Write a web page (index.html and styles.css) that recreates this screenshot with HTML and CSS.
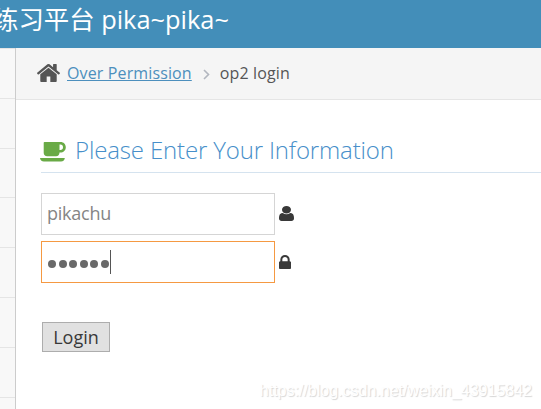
FILE: index.html
```
<!DOCTYPE html>
<html lang="zh">
<head>
    <meta charset="UTF-8">
    <title>练习平台 pika~pika~</title>
    <link rel="stylesheet" href="styles.css">
</head>
<body>
    <header class="navbar">
        <span class="brand"><span class="brand-cn">练习平台</span> pika~pika~</span>
    </header>
    <div class="main-container">
        <nav class="sidebar">
            <div class="nav-item"></div>
            <div class="nav-item"></div>
            <div class="nav-item"></div>
            <div class="nav-item"></div>
            <div class="nav-item"></div>
            <div class="nav-item"></div>
            <div class="nav-item"></div>
            <div class="nav-item"></div>
        </nav>
        <main class="content">
            <div class="breadcrumbs">
                <svg class="home-icon" viewBox="89 253 1614 1283" preserveAspectRatio="none"><path d="M1472 992v480q0 26-19 45t-45 19h-384v-384h-256v384h-384q-26 0-45-19t-19-45v-480q0-1 .5-3t.5-3l575-474 575 474q1 2 1 6zm223-69l-62 74q-8 9-21 11h-3q-13 0-21-7l-692-577-692 577q-12 8-24 7-13-2-21-11l-62-74q-8-10-7-23.5t11-21.5l719-599q32-26 76-26t76 26l244 204v-195q0-14 9-23t23-9h192q14 0 23 9t9 23v408l219 182q10 8 11 21.500t-7 23.500z"/></svg>
                <a class="crumb-link" href="#">Over Permission</a>
                <svg class="crumb-arrow" viewBox="0 0 7 11"><path d="M1 1l4.500 4.500L1 10"/></svg>
                <span class="crumb">op2 login</span>
            </div>
            <div class="page">
                <h4 class="title">
                    <svg class="coffee-icon" viewBox="0 0 26 20"><path fill-rule="evenodd" d="M4.500 0H20.500C23.700 0 25.800 2.200 25.800 5.300S23.500 10.600 20.300 10.600H19.500C19.500 13 18.200 14.300 16 14.300H7.200C5 14.300 3.700 13 3.700 10.800V.8Q3.700 0 4.500 0zM19.500 2.500V8H20.400C22 8 23 6.900 23 5.250S22 2.500 20.400 2.500zM0 16H24.800C24.800 18 23.300 19.400 21 19.400H4C1.700 19.400 0 18 0 16z"/></svg>
                    <span class="title-text">Please Enter Your Information</span>
                </h4>
                <form class="login-form">
                    <label class="row">
                        <input class="field" type="text" value="pikachu">
                        <svg class="user-icon" viewBox="256 128 1280 1536" preserveAspectRatio="none"><path d="M1536 1399q0 109-62.500 187t-150.500 78h-854q-88 0-150.500-78t-62.500-187q0-85 8.500-160.500t31.500-152 58.500-131 94-89 134.500-34.500q131 128 313 128t313-128q76 0 134.500 34.500t94 89 58.500 131 31.500 152 8.500 160.500zm-256-887q0 159-112.500 271.500t-271.500 112.500-271.500-112.500-112.500-271.500 112.500-271.500 271.500-112.500 271.500 112.500 112.500 271.500z"/></svg>
                    </label>
                    <label class="row">
                        <span class="field focus">
                            <span class="dots"><i></i><i></i><i></i><i></i><i></i><i></i></span>
                            <span class="caret"></span>
                        </span>
                        <svg class="lock-icon" viewBox="320 128 1152 1408" preserveAspectRatio="none"><path d="M640 768h512v-192q0-106-75-181t-181-75-181 75-75 181v192zm832 96v576q0 40-28 68t-68 28h-960q-40 0-68-28t-28-68v-576q0-40 28-68t68-28h32v-192q0-184 132-316t316-132 316 132 132 316v192h32q40 0 68 28t28 68z"/></svg>
                    </label>
                    <button class="submit" type="button">Login</button>
                </form>
            </div>
        </main>
    </div>
    <div class="watermark">https://blog.csdn.net/weixin_43915842</div>
</body>
</html>
```
FILE: styles.css
```
* {
    box-sizing: border-box;
}
body {
    margin: 0;
    height: 409px;
    overflow: hidden;
    display: flex;
    flex-direction: column;
    background-color: #fff;
    color: #393939;
    font-family: "Open Sans", "Noto Sans CJK SC", sans-serif;
}
.navbar {
    height: 48px;
    flex: none;
    background-color: #438eb9;
    color: #fff;
    overflow: hidden;
}
.brand {
    display: block;
    margin-left: -7px;
    font-size: 25.400px;
    line-height: 37px;
    white-space: nowrap;
}
.brand-cn {
    font-family: "Noto Sans CJK SC", sans-serif;
}
.main-container {
    flex: 1;
    display: flex;
    min-height: 0;
}
.sidebar {
    width: 16px;
    flex: none;
    overflow: hidden;
    background-color: #f8f8f8;
    border-right: 1px solid #ccc;
}
.nav-item {
    height: 49.8px;
    border-top: 1px solid #e5e5e5;
}
.content {
    flex: 1;
    min-width: 0;
}
.breadcrumbs {
    height: 52px;
    display: flex;
    align-items: center;
    padding: 0 0 2px 21px;
    background-color: #f5f5f5;
    border-bottom: 1px solid #e5e5e5;
    font-size: 16px;
    letter-spacing: 0.130px;
    color: #555;
    white-space: nowrap;
}
.home-icon {
    width: 23px;
    height: 18px;
    margin-right: 7px;
    fill: #555;
}
.crumb-link {
    color: #4c8fbd;
    text-decoration: underline;
}
.crumb-arrow {
    width: 7px;
    height: 11px;
    margin: 4px 10px 0 11px;
    fill: none;
    stroke: #b2b6bf;
    stroke-width: 1.6;
}
.page {
    padding: 33px 0 0 25px;
}
.title {
    display: flex;
    align-items: center;
    height: 40px;
    margin: 0 0 20px;
    border-bottom: 1px solid #d5e3ef;
    color: #478fca;
    font-size: 24px;
    font-weight: 300;
    letter-spacing: -0.150px;
    white-space: nowrap;
}
.coffee-icon {
    width: 26px;
    height: 20px;
    margin: 0 9px 2px -1px;
    fill: #69aa46;
}
.title-text {
    padding-bottom: 6px;
}
.row {
    display: flex;
    align-items: center;
    height: 42px;
    margin-bottom: 6px;
}
.field {
    display: flex;
    align-items: center;
    width: 234px;
    height: 42px;
    padding: 0 5px 2px;
    border: 1px solid #d5d5d5;
    outline: none;
    background-color: #fff;
    color: #858585;
    font-family: "Open Sans", sans-serif;
    font-size: 18px;
    letter-spacing: -0.250px;
}
.focus {
    padding: 0 6px;
    border-color: #f59942;
}
.dots {
    display: flex;
    gap: 2.600px;
    padding-top: 3px;
}
.dots i {
    width: 8px;
    height: 8px;
    border-radius: 50%;
    background-color: #696969;
}
.caret {
    width: 1px;
    height: 24px;
    margin-left: 1px;
    background-color: #555;
}
.user-icon {
    width: 15px;
    height: 15px;
    margin: 0 0 1px 4px;
    fill: #393939;
}
.lock-icon {
    width: 12px;
    height: 14px;
    margin-left: 4px;
    fill: #393939;
}
.submit {
    width: 68px;
    height: 30px;
    margin: 33px 0 0 1px;
    padding: 0;
    border: 1px solid #adadad;
    background-color: #e1e1e1;
    color: #393939;
    font-family: "Open Sans", sans-serif;
    font-size: 18px;
    line-height: 28px;
}
.watermark {
    position: absolute;
    right: 9px;
    bottom: 9px;
    color: #fff;
    font-family: "Liberation Sans", Arial, sans-serif;
    font-size: 16px;
    text-shadow: 1px 1px 1px #d6d6d6;
}
```
